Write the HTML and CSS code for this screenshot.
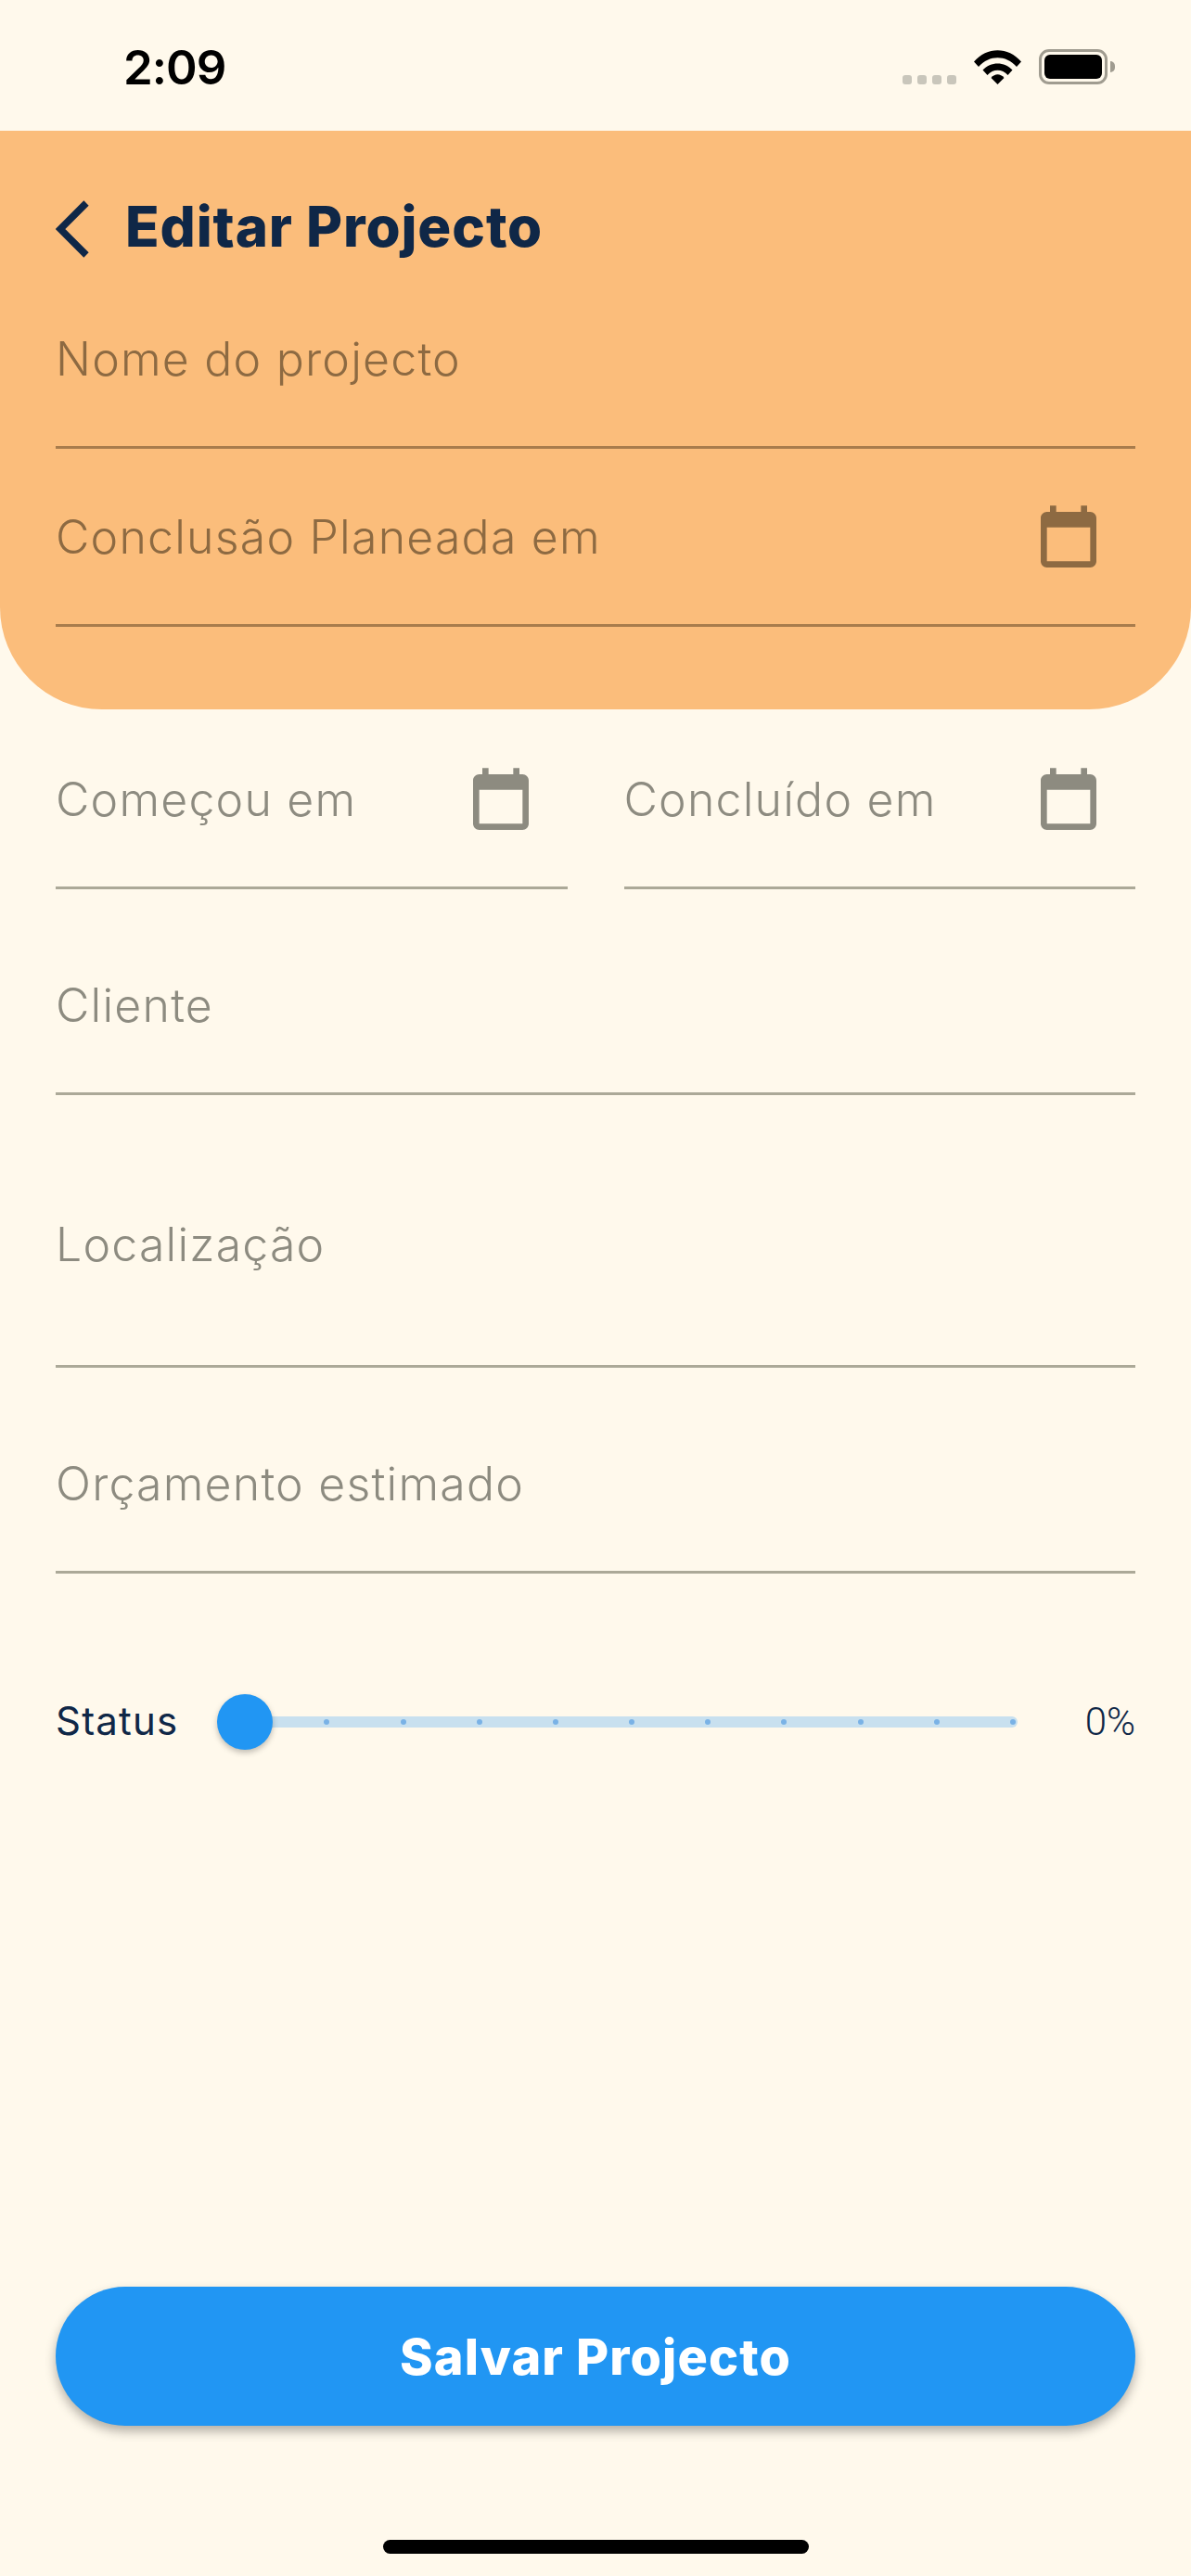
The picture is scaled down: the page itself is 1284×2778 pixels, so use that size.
FILE: index.html
```html
<!DOCTYPE html>
<html lang="pt">
<head>
  <meta charset="UTF-8">
  <meta name="viewport" content="width=device-width, initial-scale=1.0">
  <title>Editar Projecto</title>
  <link rel="stylesheet" href="styles.css">
</head>
<body>
  <!-- Status Bar -->
  <div class="status-bar">
    <span class="time">2:09</span>
    <div class="status-icons">
      <div class="signal"><i></i><i></i><i></i><i></i></div>
      <svg class="wifi" viewBox="0 0 51 37" width="51" height="37">
        <path d="M0 12.5C14-4 37-4 51 12.5L46 18C34.500 5 16.500 5 5 18Z"/>
        <path d="M9.500 21.500C18 12 33 12 41.500 21.500L36.500 27C30.500 20 20.500 20 14.500 27Z"/>
        <path d="M18.500 30C22.500 25 28.500 25 32.500 30L25.500 37Z"/>
      </svg>
      <div class="battery"><div class="battery-fill"></div></div>
      <div class="battery-nub"></div>
    </div>
  </div>

  <!-- Orange Header -->
  <div class="header">
    <div class="title-row">
      <svg class="back" viewBox="0 0 36 62" width="36" height="62">
        <path d="M33 3L5 31L33 59" fill="none" stroke="#0f2747" stroke-width="7.500"/>
      </svg>
      <h1>Editar Projecto</h1>
    </div>
    <div class="field on-orange"><span>Nome do projecto</span></div>
    <div class="field on-orange">
      <span>Conclusão Planeada em</span>
      <svg class="cal" viewBox="0 0 24 24"><path d="M19 3h-1V1h-2v2H8V1H6v2H5c-1.110 0-2 .9-2 2v14c0 1.100.89 2 2 2h14c1.100 0 2-.9 2-2V5c0-1.100-.9-2-2-2zm0 16H5V8h14v11z"/></svg>
    </div>
  </div>

  <!-- Form -->
  <div class="form">
    <div class="field-pair">
      <div class="field">
        <span>Começou em</span>
        <svg class="cal" viewBox="0 0 24 24"><path d="M19 3h-1V1h-2v2H8V1H6v2H5c-1.110 0-2 .9-2 2v14c0 1.100.89 2 2 2h14c1.100 0 2-.9 2-2V5c0-1.100-.9-2-2-2zm0 16H5V8h14v11z"/></svg>
      </div>
      <div class="field">
        <span>Concluído em</span>
        <svg class="cal" viewBox="0 0 24 24"><path d="M19 3h-1V1h-2v2H8V1H6v2H5c-1.110 0-2 .9-2 2v14c0 1.100.89 2 2 2h14c1.100 0 2-.9 2-2V5c0-1.100-.9-2-2-2zm0 16H5V8h14v11z"/></svg>
      </div>
    </div>
    <div class="field spaced"><span>Cliente</span></div>
    <div class="field spaced tall"><span>Localização</span></div>
    <div class="field spaced"><span>Orçamento estimado</span></div>

    <!-- Slider -->
    <div class="status-row">
      <span class="status-label">Status</span>
      <div class="slider">
        <div class="ticks"><i></i><i></i><i></i><i></i><i></i><i></i><i></i><i></i><i></i><i></i></div>
        <div class="thumb"></div>
      </div>
      <span class="status-value">0%</span>
    </div>
  </div>

  <!-- Footer -->
  <div class="footer">
    <button class="save">Salvar Projecto</button>
    <div class="home-bar"></div>
  </div>
</body>
</html>
```

FILE: styles.css
```css
/* General Reset */
* {
  margin: 0;
  padding: 0;
  box-sizing: border-box;
}

body {
  display: flex;
  flex-direction: column;
  width: 1284px;
  height: 2778px;
  overflow: hidden;
  background: #fff9ec;
  font-family: 'Inter', sans-serif;
}

/* Status Bar */
.status-bar {
  display: flex;
  justify-content: space-between;
  height: 141px;
  padding: 45px 82px 0 133px;
}

.time {
  font-size: 51px;
  line-height: 56px;
  font-weight: 600;
  letter-spacing: -1px;
  color: #000;
}

.status-icons {
  display: flex;
  align-items: flex-start;
  padding-top: 8px;
}

.signal {
  display: flex;
  gap: 6px;
  margin-top: 28px;
  margin-right: 19px;
}

.signal i {
  width: 10px;
  height: 10px;
  border-radius: 3px;
  background: #c9c6bb;
}

.wifi {
  margin-top: 1px;
  margin-right: 19px;
}

.battery {
  width: 74px;
  height: 38px;
  padding: 3px;
  border: 3px solid #a09c90;
  border-radius: 11px;
}

.battery-fill {
  height: 100%;
  border-radius: 6px;
  background: #000;
}

.battery-nub {
  width: 5px;
  height: 12px;
  margin: 13px 0 0 3px;
  border-radius: 0 6px 6px 0;
  background: #a09c90;
}

/* Orange Header */
.header {
  height: 624px;
  padding: 0 60px;
  border-radius: 0 0 110px 110px;
  background: #fbbd7b;
}

.title-row {
  display: flex;
  align-items: center;
  gap: 39px;
  height: 151px;
  padding-top: 60px;
}

.back {
  flex: none;
}

h1 {
  margin-top: -5px;
  font-size: 60px;
  font-weight: 800;
  letter-spacing: 0.9px;
  color: #0f2747;
}

/* Fields */
.field {
  display: flex;
  justify-content: space-between;
  align-items: center;
  height: 192px;
  padding-right: 32px;
  border-bottom: 3px solid #aca998;
  font-size: 50px;
  font-weight: 300;
  letter-spacing: 1.200px;
  color: #8d8b80;
}

.field.on-orange {
  border-bottom-color: #a87c4c;
  color: #8d6a42;
}

.cal {
  width: 80px;
  height: 80px;
  margin-top: 6px;
  fill: currentColor;
}

.form {
  padding: 2px 60px 0;
}

.field-pair {
  display: flex;
  gap: 61px;
}

.field-pair .field {
  flex: 1;
}

.field.spaced {
  margin-top: 30px;
}

.field.tall {
  height: 264px;
}

/* Slider */
.status-row {
  display: flex;
  align-items: center;
  height: 60px;
  margin-top: 130px;
  font-size: 42px;
  font-weight: 400;
  color: #0f2747;
}

.status-label {
  width: 174px;
  margin-top: -3px;
  letter-spacing: 1.200px;
}

.slider {
  position: relative;
  width: 863px;
  height: 12px;
  border-radius: 6px;
  background: #c8e0ef;
}

.ticks {
  display: flex;
  justify-content: flex-end;
  gap: 76.200px;
  padding: 3px 2px 0 0;
}

.ticks i {
  width: 6px;
  height: 6px;
  border-radius: 50%;
  background: #7ab2e6;
}

.thumb {
  position: absolute;
  left: 0;
  top: -24px;
  width: 60px;
  height: 60px;
  border-radius: 50%;
  background: #2196f3;
  box-shadow: 0 3px 6px rgba(0, 0, 0, 0.25);
}

.status-value {
  margin-left: auto;
  margin-top: -2px;
  font-family: 'Roboto', sans-serif;
  font-weight: 300;
}

/* Footer */
.footer {
  display: flex;
  flex-direction: column;
  align-items: center;
  margin-top: auto;
  padding: 0 60px 24px;
}

.save {
  width: 100%;
  height: 150px;
  border: none;
  border-radius: 75px;
  background: #2196f3;
  box-shadow: 0 6px 12px rgba(0, 0, 0, 0.3);
  font-family: 'Inter', sans-serif;
  font-size: 54px;
  font-weight: 800;
  letter-spacing: 1.1px;
  color: #fff;
}

.home-bar {
  width: 459px;
  height: 15px;
  margin-top: 123px;
  border-radius: 8px;
  background: #000;
}
```
